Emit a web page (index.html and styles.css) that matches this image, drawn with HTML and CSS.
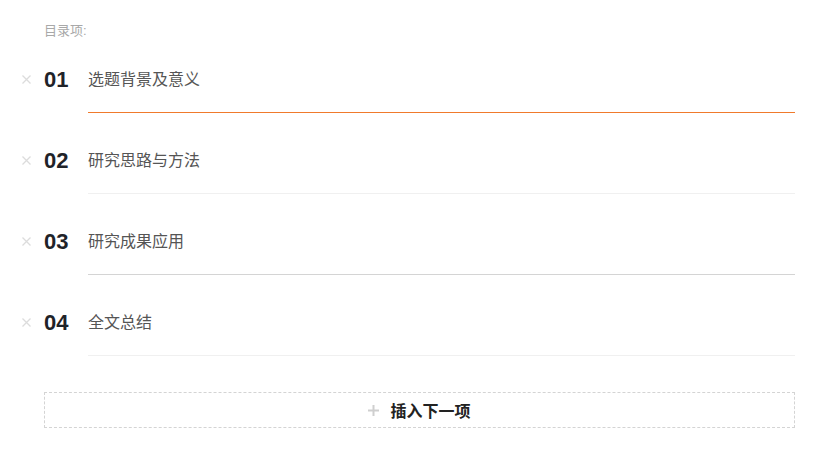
FILE: index.html
```html
<!DOCTYPE html>
<html lang="zh">
<head>
<meta charset="utf-8">
<link rel="stylesheet" href="styles.css">
</head>
<body>
<div class="wrap">
  <div class="label">目录项:</div>
  <div class="list">
    <div class="row">
      <div class="del"><svg width="9" height="9" viewBox="0 0 9 9"><path d="M0.5 0.5L8.5 8.5M8.5 0.5L0.5 8.5" stroke="#dcdcdc" stroke-width="1.3" fill="none"/></svg></div>
      <div class="num">01</div>
      <div class="field active">选题背景及意义</div>
    </div>
    <div class="row">
      <div class="del"><svg width="9" height="9" viewBox="0 0 9 9"><path d="M0.5 0.5L8.5 8.5M8.5 0.5L0.5 8.5" stroke="#dcdcdc" stroke-width="1.3" fill="none"/></svg></div>
      <div class="num">02</div>
      <div class="field">研究思路与方法</div>
    </div>
    <div class="row">
      <div class="del"><svg width="9" height="9" viewBox="0 0 9 9"><path d="M0.5 0.5L8.5 8.5M8.5 0.5L0.5 8.5" stroke="#dcdcdc" stroke-width="1.3" fill="none"/></svg></div>
      <div class="num">03</div>
      <div class="field hover">研究成果应用</div>
    </div>
    <div class="row">
      <div class="del"><svg width="9" height="9" viewBox="0 0 9 9"><path d="M0.5 0.5L8.5 8.5M8.5 0.5L0.5 8.5" stroke="#dcdcdc" stroke-width="1.3" fill="none"/></svg></div>
      <div class="num">04</div>
      <div class="field">全文总结</div>
    </div>
  </div>
  <div class="add">
    <svg class="plus" width="11" height="11" viewBox="0 0 11 11"><rect x="4.5" y="0" width="2" height="11" fill="#cfcfcf"/><rect x="0" y="4.5" width="11" height="2" fill="#cfcfcf"/></svg>
    <span>插入下一项</span>
  </div>
</div>
</body>
</html>
```
FILE: styles.css
```css
html, body {
  margin: 0;
  padding: 0;
  background: #fff;
}
body {
  font-family: "Liberation Sans", "Noto Sans CJK SC", sans-serif;
}
.wrap {
  padding: 21px 43px 0 22px;
}
.label {
  margin-left: 22px;
  height: 20px;
  line-height: 20px;
  font-size: 13px;
  color: #a8a8a8;
}
.row {
  display: flex;
  align-items: flex-start;
  padding-top: 23px;
  margin-bottom: 9px;
}
.del {
  width: 22px;
  height: 32px;
  display: flex;
  align-items: center;
}
.del svg {
  display: block;
  margin-top: -1px;
}
.num {
  width: 44px;
  height: 32px;
  line-height: 32px;
  font-size: 22px;
  font-weight: bold;
  color: #1f2329;
}
.field {
  flex: 1;
  height: 32px;
  line-height: 32px;
  padding-bottom: 16px;
  font-size: 16px;
  color: #555;
  border-bottom: 1px solid #f0f0f0;
}
.field.active {
  border-bottom-color: #f07a2c;
}
.field.hover {
  border-bottom-color: #d4d4d4;
}
.add {
  margin: 36px 0 0 22px;
  height: 34px;
  border: 1px dashed #d4d4d4;
  display: flex;
  align-items: center;
  justify-content: center;
  gap: 11px;
  font-size: 16px;
  font-weight: bold;
  color: #222;
}
.plus {
  display: block;
}
```
